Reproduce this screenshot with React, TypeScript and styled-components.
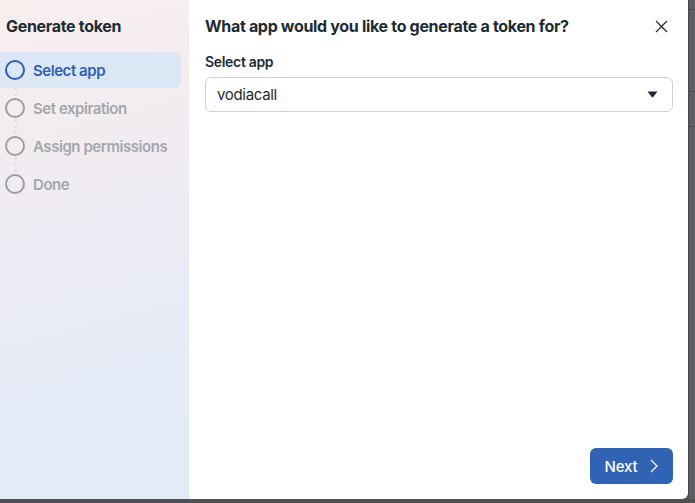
import React from "react";
import styled, { createGlobalStyle } from "styled-components";

const GlobalStyle = createGlobalStyle`
    html, body {
        margin: 0;
        padding: 0;
        background: #5d5d61;
    }
    * {
        box-sizing: border-box;
    }
    body {
        font-family: Inter, "Noto Sans", "Liberation Sans", sans-serif;
        color: #1c2b33;
        letter-spacing: -0.02em;
    }
`;

const Page = styled.div`
    width: 695px;
    height: 503px;
    display: flex;
    background: #505053;
    overflow: hidden;
`;

const Dialog = styled.div`
    width: 688px;
    height: 499px;
    display: flex;
`;

const Backdrop = styled.div`
    flex: 1;
    height: 499px;
    display: flex;
    flex-direction: column;
    background: #5f5f63;
    border-left: 1px solid #48484b;
`;

const BackdropLine = styled.div<{ gap: number }>`
    margin-top: ${(p) => p.gap}px;
    height: 1px;
    background: #4a4a4d;
`;

const Sidebar = styled.div`
    width: 189px;
    height: 100%;
    background: linear-gradient(165deg, #f8eeee 0%, #f1ecf2 35%, #e6ebf6 70%, #e2ebf6 100%);
    padding-top: 16px;
`;

const SidebarTitle = styled.h2`
    margin: 0 0 16px 6px;
    font-size: 16px;
    font-weight: 700;
    line-height: 20px;
    color: #1c2b33;
`;

const StepList = styled.div`
    display: flex;
    flex-direction: column;
    gap: 2px;
`;

const Step = styled.div<{ active: boolean }>`
    position: relative;
    width: 181px;
    height: 36px;
    display: flex;
    align-items: center;
    gap: 8px;
    padding-left: 5px;
    border-radius: 0 6px 6px 0;
    background: ${(p) => (p.active ? "#dce7f5" : "transparent")};
    color: ${(p) => (p.active ? "#2f5fb3" : "#a3a6aa")};
    font-size: 15px;
    font-weight: 600;
    letter-spacing: -0.03em;
`;

const Ring = styled.span<{ active: boolean }>`
    width: 20px;
    height: 20px;
    border-radius: 50%;
    border: 2px solid ${(p) => (p.active ? "#2f5fb3" : "#9b9ea3")};
    flex-shrink: 0;
`;

const Dots = styled.span`
    position: absolute;
    left: 13.5px;
    top: -9px;
    display: flex;
    flex-direction: column;
    gap: 3px;
`;

const Dot = styled.span`
    width: 3px;
    height: 3px;
    border-radius: 50%;
    background: #e0dfe3;
`;

const Panel = styled.div`
    flex: 1;
    height: 100%;
    background: #ffffff;
    border-radius: 0 0 6px 0;
    display: flex;
    flex-direction: column;
    padding: 16px 15px 15px 16px;
`;

const PanelHeader = styled.div`
    display: flex;
    align-items: center;
    justify-content: space-between;
    height: 20px;
    margin-bottom: 16px;
`;

const PanelTitle = styled.h1`
    margin: 0;
    font-size: 16px;
    font-weight: 700;
    color: #1c2b33;
`;

const CloseButton = styled.button`
    border: none;
    background: none;
    padding: 0;
    margin-right: 5px;
    display: flex;
    color: #1c2b33;
    cursor: pointer;
`;

const FieldLabel = styled.label`
    font-size: 14px;
    font-weight: 600;
    line-height: 18px;
    color: #1c2b33;
    margin-top: 1px;
    margin-bottom: 6px;
`;

const SelectBox = styled.div`
    height: 35px;
    border: 1px solid #cbd2d9;
    border-radius: 6px;
    display: flex;
    align-items: center;
    justify-content: space-between;
    padding: 0 14px 0 11px;
    font-size: 15px;
    color: #1c2b33;
`;

const Spacer = styled.div`
    flex: 1;
`;

const Footer = styled.div`
    display: flex;
    justify-content: flex-end;
`;

const NextButton = styled.button`
    width: 83px;
    height: 36px;
    border: none;
    border-radius: 6px;
    background: #3163b5;
    color: #ffffff;
    font-family: inherit;
    font-size: 15px;
    font-weight: 500;
    letter-spacing: -0.01em;
    display: flex;
    align-items: center;
    justify-content: center;
    gap: 13px;
    padding-left: 6px;
    cursor: pointer;
`;

const steps = ["Select app", "Set expiration", "Assign permissions", "Done"];

export default function App() {
    return (
        <>
            <GlobalStyle />
            <Page>
                <Dialog>
                    <Sidebar>
                        <SidebarTitle>Generate token</SidebarTitle>
                        <StepList>
                            {steps.map((s, i) => (
                                <Step key={s} active={i === 0}>
                                    {i > 0 && (
                                        <Dots>
                                            <Dot />
                                            <Dot />
                                            <Dot />
                                        </Dots>
                                    )}
                                    <Ring active={i === 0} />
                                    {s}
                                </Step>
                            ))}
                        </StepList>
                    </Sidebar>
                    <Panel>
                        <PanelHeader>
                            <PanelTitle>What app would you like to generate a token for?</PanelTitle>
                            <CloseButton aria-label="Close">
                                <svg width="13" height="13" viewBox="0 0 13 13">
                                    <path d="M1 1 L12 12 M12 1 L1 12" stroke="currentColor" strokeWidth="1.2" />
                                </svg>
                            </CloseButton>
                        </PanelHeader>
                        <FieldLabel>Select app</FieldLabel>
                        <SelectBox>
                            <span>vodiacall</span>
                            <svg width="11" height="7" viewBox="0 0 11 7">
                                <path d="M0.5 0.5 H10.5 L6.2 6 Q5.5 6.8 4.8 6 Z" fill="#1c2b33" />
                            </svg>
                        </SelectBox>
                        <Spacer />
                        <Footer>
                            <NextButton>
                                Next
                                <svg width="8" height="14" viewBox="0 0 8 14">
                                    <path d="M1 1 L7 7 L1 13" stroke="#ffffff" strokeWidth="1.3" fill="none" />
                                </svg>
                            </NextButton>
                        </Footer>
                    </Panel>
                </Dialog>
                <Backdrop>
                    <BackdropLine gap={9} />
                    <BackdropLine gap={81} />
                    <BackdropLine gap={34} />
                </Backdrop>
            </Page>
        </>
    );
}
